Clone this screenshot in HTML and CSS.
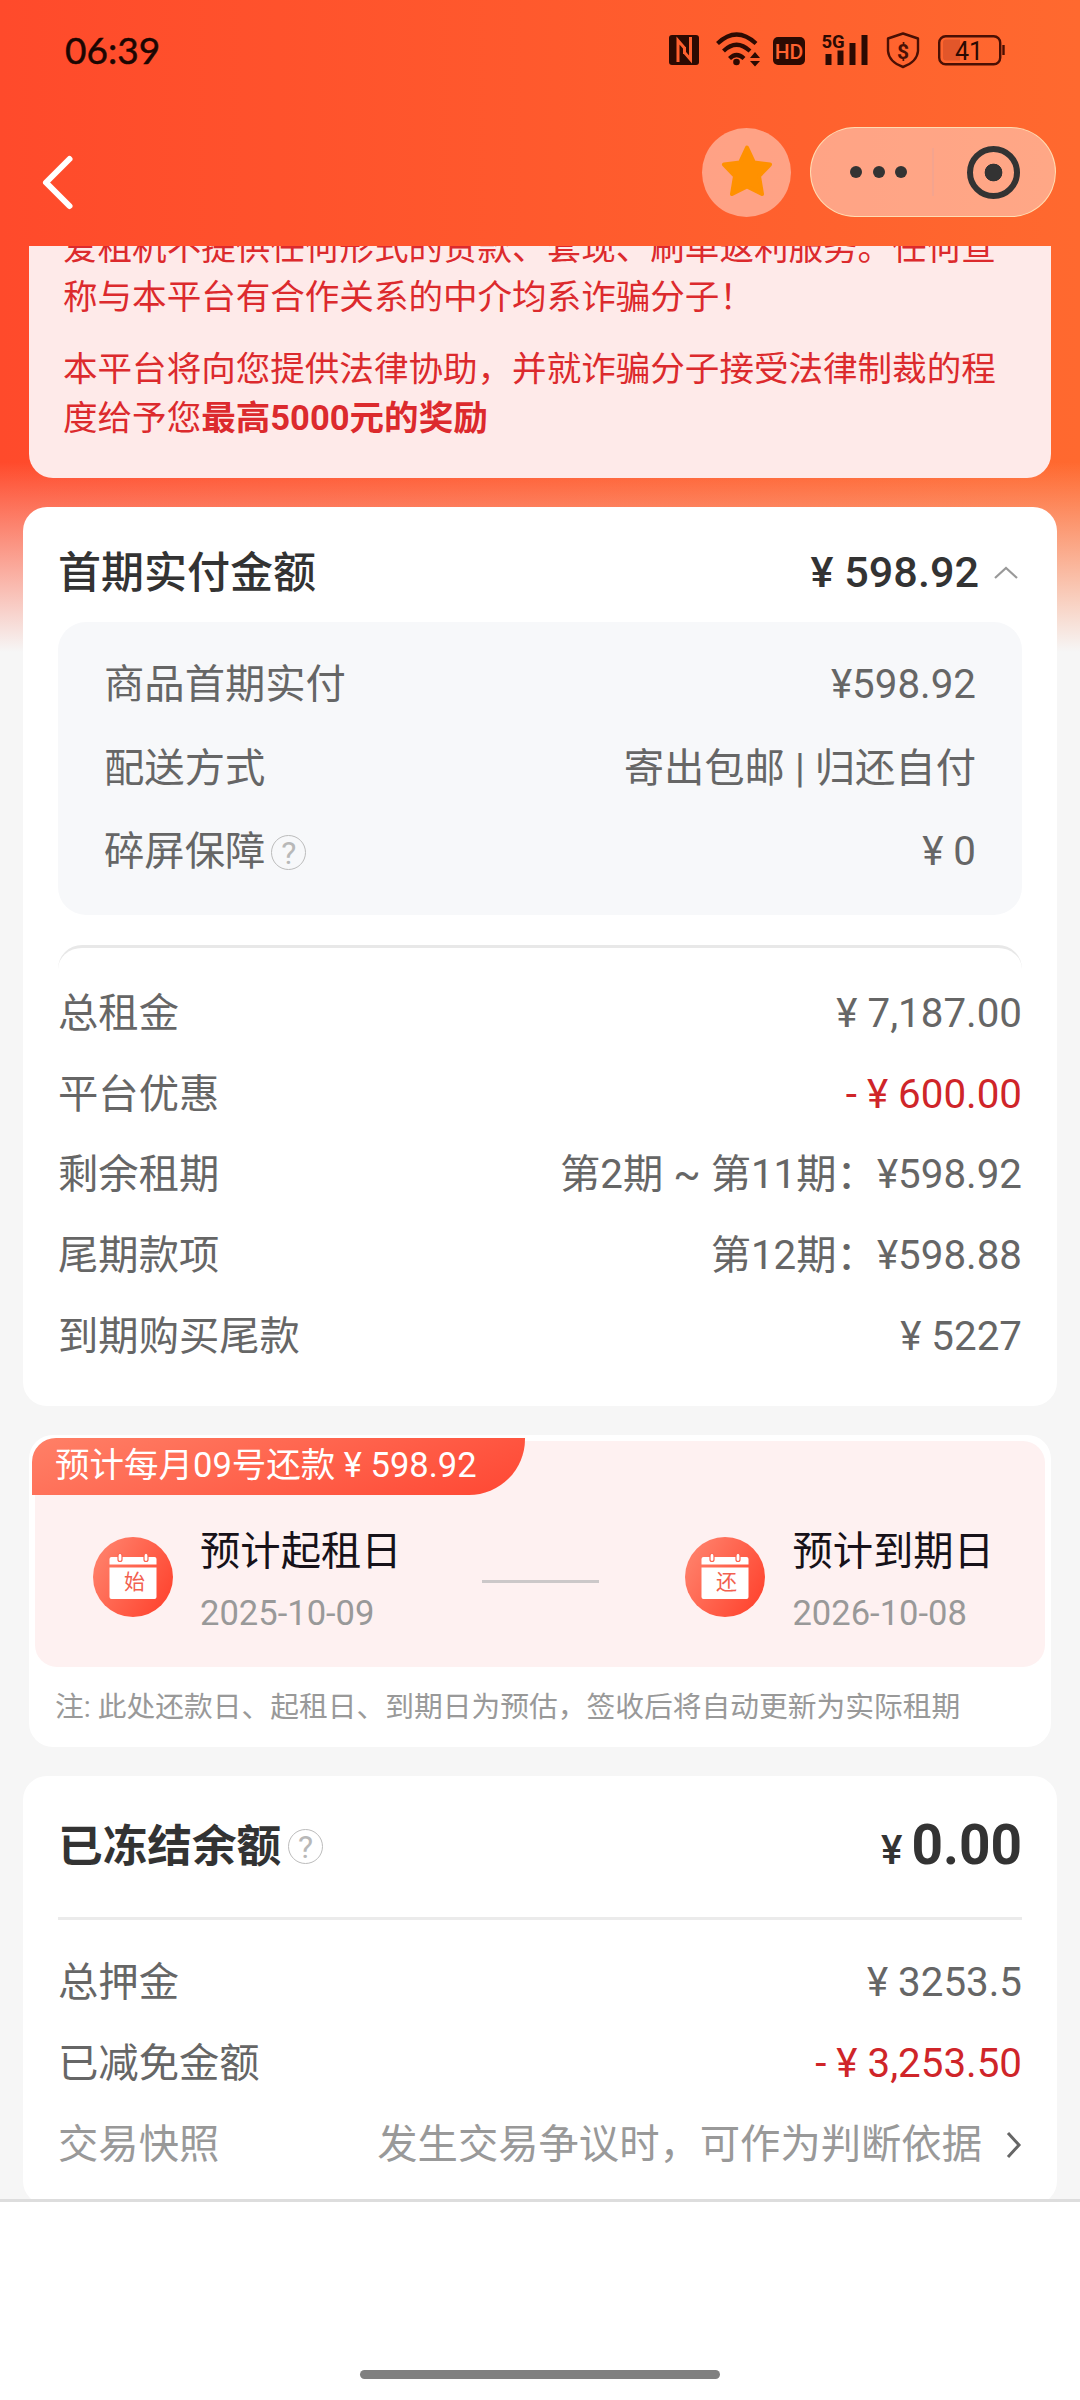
FILE: index.html
```html
<!DOCTYPE html>
<html lang="zh-CN">
<head>
<meta charset="utf-8">
<title>订单确认</title>
<link rel="stylesheet" href="styles.css">
</head>
<body>
<div class="page">
  <header class="header">
    <div class="status">
      <span class="time">06:39</span>
      <svg class="status-icons" width="340" height="40" viewBox="668 30 340 40">
        <rect x="669" y="35" width="30" height="30" rx="3" fill="#2c0a02"/>
        <path d="M678 62V40.500L684.500 48V54M690.500 37V59.500L684.500 52.500V47" fill="none" stroke="#ff602f" stroke-width="3"/>
        <g fill="none" stroke="#2c0a02" stroke-width="4.200">
          <path d="M717.500 43.500Q736.500 25.500 756 43.500"/>
          <path d="M723.500 51Q736.500 38.500 750 51"/>
          <path d="M729.500 58.500Q736.500 51.500 744 58.500"/>
        </g>
        <circle cx="736.500" cy="62" r="3.300" fill="#2c0a02"/>
        <path d="M750 58L755 52L760 58ZM750 61L755 66.500L760 61Z" fill="#2c0a02"/>
        <rect x="773" y="37" width="32" height="28" rx="5" fill="#2c0a02"/>
        <text x="789" y="59" class="hd">HD</text>
        <text x="821.500" y="48" class="fiveg">5G</text>
        <path d="M825.500 54h6v11h-6zM837.500 50.500h6v14.500h-6zM849.500 43h6v22h-6zM861.500 35h6v30h-6z" fill="#2c0a02"/>
        <path d="M903 33.500L918 38.500V51Q917 62 903 67Q889 62 888 51V38.500Z" fill="none" stroke="#4a1004" stroke-width="2.400" stroke-linejoin="round"/>
        <text x="903" y="58.500" class="dollar">$</text>
        <path d="M946 39.500h14v21h-14q-3 0-3-3v-15q0-3 3-3z" fill="#e2562a"/>
        <rect x="939.200" y="36.200" width="61" height="28" rx="6.500" fill="none" stroke="#4a1004" stroke-width="2.400"/>
        <path d="M1003.500 45v10" stroke="#4a1004" stroke-width="2.400"/>
        <text x="969" y="59.500" class="pct">41</text>
      </svg>
    </div>
    <nav class="nav">
      <svg class="back" width="40" height="60" viewBox="38 152 40 60"><path d="M69.500 159L46 182.500L69.500 206" fill="none" stroke="#fff" stroke-width="6" stroke-linecap="round" stroke-linejoin="round"/></svg>
      <div class="nav-actions">
        <div class="fav">
          <svg width="54" height="54" viewBox="-27 -26 54 54"><path d="M0-23.500L7-8.500L23-6.500L12 5L15 23L0 15.500L-15 23L-12 5L-23-6.500L-7-8.500Z" fill="#ff9100" stroke="#ff9100" stroke-width="4" stroke-linejoin="round"/></svg>
        </div>
        <div class="capsule">
          <div class="dots"><i></i><i></i><i></i></div>
          <div class="sep"></div>
          <div class="target"></div>
        </div>
      </div>
    </nav>
  </header>

  <main class="content">
    <section class="notice">
      <p>爱租机不提供任何形式的贷款、套现、刷单返利服务。任何宣<br>称与本平台有合作关系的中介均系诈骗分子！</p>
      <p>本平台将向您提供法律协助，并就诈骗分子接受法律制裁的程<br>度给予您<b>最高5000元的奖励</b></p>
    </section>

    <section class="card bill">
      <div class="bill-head">
        <h2>首期实付金额</h2>
        <div class="sum">¥ 598.92<svg width="26" height="16" viewBox="0 0 26 16"><path d="M2 13L13 3L24 13" fill="none" stroke="#999" stroke-width="2.200"/></svg></div>
      </div>
      <div class="detail">
        <div class="row"><span>商品首期实付</span><span>¥598.92</span></div>
        <div class="row"><span>配送方式</span><span>寄出包邮 | 归还自付</span></div>
        <div class="row"><span class="with-help">碎屏保障<i class="help">?</i></span><span>¥ 0</span></div>
      </div>
      <div class="rows">
        <div class="row"><span>总租金</span><span>¥ 7,187.00</span></div>
        <div class="row"><span>平台优惠</span><span class="red">- ¥ 600.00</span></div>
        <div class="row"><span>剩余租期</span><span>第2期 ~ 第11期：¥598.92</span></div>
        <div class="row"><span>尾期款项</span><span>第12期：¥598.88</span></div>
        <div class="row"><span>到期购买尾款</span><span>¥ 5227</span></div>
      </div>
    </section>

    <section class="card plan">
      <div class="tag">预计每月09号还款 ¥ 598.92</div>
      <div class="term">
        <div class="date">
          <svg width="80" height="80" viewBox="0 0 80 80">
            <defs><linearGradient id="disc" x1="0" y1="0.200" x2="1" y2="0.800"><stop offset="0.100" stop-color="#ff7c66"/><stop offset="0.900" stop-color="#ff4934"/></linearGradient></defs>
            <circle cx="40" cy="40" r="40" fill="url(#disc)"/>
            <path d="M18.500 20h43q2 0 2 2v5.500h-47V22q0-2 2-2zM16.500 30.500h47V60q0 2-2 2h-43q-2 0-2-2z" fill="#fff"/>
            <g fill="#fff" stroke="#fb6450" stroke-width="1.200"><rect x="25" y="16.500" width="4" height="8" rx="2"/><rect x="51" y="16.500" width="4" height="8" rx="2"/></g>
            <text x="41.500" y="52" class="cal">始</text>
          </svg>
          <div class="date-text"><strong>预计起租日</strong><span>2025-10-09</span></div>
        </div>
        <div class="dash"></div>
        <div class="date">
          <svg width="80" height="80" viewBox="0 0 80 80">
            <circle cx="40" cy="40" r="40" fill="url(#disc)"/>
            <path d="M18.500 20h43q2 0 2 2v5.500h-47V22q0-2 2-2zM16.500 30.500h47V60q0 2-2 2h-43q-2 0-2-2z" fill="#fff"/>
            <g fill="#fff" stroke="#fb6450" stroke-width="1.200"><rect x="25" y="16.500" width="4" height="8" rx="2"/><rect x="51" y="16.500" width="4" height="8" rx="2"/></g>
            <text x="41.500" y="52" class="cal">还</text>
          </svg>
          <div class="date-text"><strong>预计到期日</strong><span>2026-10-08</span></div>
        </div>
      </div>
      <p class="note">注: 此处还款日、起租日、到期日为预估，签收后将自动更新为实际租期</p>
    </section>

    <section class="card deposit">
      <div class="dep-head">
        <h2 class="with-help">已冻结余额<i class="help">?</i></h2>
        <div class="balance"><small>¥</small>0.00</div>
      </div>
      <div class="row"><span>总押金</span><span>¥ 3253.5</span></div>
      <div class="row"><span>已减免金额</span><span class="red">- ¥ 3,253.50</span></div>
      <div class="row muted"><span>交易快照</span><span class="link">发生交易争议时，可作为判断依据<svg width="16" height="30" viewBox="0 0 16 30"><path d="M2 3L13 15L2 27" fill="none" stroke="#666" stroke-width="3"/></svg></span></div>
    </section>
  </main>

  <footer class="footer"><div class="home"></div></footer>
</div>
</body>
</html>
```
FILE: styles.css
```css
* { box-sizing: border-box; }

body {
  margin: 0;
  font-family: Roboto, "Noto Sans CJK SC", sans-serif;
  font-size: 40.32px;
  line-height: 60px;
  color: #666;
}

h2, p { margin: 0; }

.page {
  width: 1080px;
  height: 2400px;
  display: flex;
  flex-direction: column;
  overflow: hidden;
  background:
    linear-gradient(to bottom, rgba(246, 246, 246, 0) 462px, #f6f6f6 652px),
    linear-gradient(to right, #ff4a2b, #ff692f);
}

/* status bar and navigation */
.header { height: 246px; flex: none; }

.status {
  height: 100px;
  padding: 0 72px 0 65px;
  display: flex;
  justify-content: space-between;
  align-items: center;
}

.time {
  font: 37px/40px Lato, sans-serif;
  color: #1c0602;
  -webkit-text-stroke: 0.5px #1c0602;
}

.status-icons { display: block; }
.hd { font: 500 21px Roboto, sans-serif; fill: #ff622f; text-anchor: middle; }
.fiveg { font: 700 18.500px Roboto, sans-serif; fill: #2c0a02; }
.dollar { font: 700 21px Roboto, sans-serif; fill: #4a1004; text-anchor: middle; }
.pct { font: 25px Roboto, sans-serif; fill: #2c0a02; text-anchor: middle; }

.nav {
  padding: 27px 24px 0 38px;
  display: flex;
  justify-content: space-between;
  align-items: flex-start;
}

.back { margin-top: 25px; }
.nav-actions { display: flex; gap: 19px; align-items: center; }

.fav {
  width: 89px;
  height: 89px;
  border-radius: 50%;
  background: rgba(255, 255, 255, 0.42);
  display: flex;
  align-items: center;
  justify-content: center;
}

.capsule {
  width: 246px;
  height: 90px;
  border: 1px solid rgba(255, 235, 190, 0.8);
  border-radius: 45px;
  background: rgba(255, 255, 255, 0.42);
  display: flex;
  align-items: center;
  padding-left: 39px;
}

.dots { display: flex; gap: 10.500px; }
.dots i { width: 12px; height: 12px; border-radius: 50%; background: #333; }
.sep { width: 2px; height: 48px; margin-left: 25px; background: #f4a48e; }

.target {
  width: 53px;
  height: 53px;
  margin-left: 33px;
  border: 6px solid #333;
  border-radius: 50%;
  background: radial-gradient(circle, #333 8.500px, transparent 9.200px);
}

/* scrolling content */
.content {
  flex: 1;
  min-height: 0;
  overflow: hidden;
}

.notice {
  height: 232px;
  margin: 0 29px;
  padding: 0 34px;
  overflow: hidden;
  border-radius: 0 0 24px 24px;
  background: #feeae9;
  color: #dc2a2d;
  font-size: 34.56px;
  line-height: 49px;
  white-space: nowrap;
}

.notice p:first-child { margin-top: -22px; }
.notice p + p { margin-top: 23px; }

.card { background: #fff; border-radius: 24px; }

.bill { height: 899px; margin: 29px 23px 0; padding: 0 35px; }

.bill-head {
  height: 115px;
  padding: 16px 3px 0 0;
  display: flex;
  align-items: center;
  justify-content: space-between;
  color: #333;
}

h2 { font-size: 43px; font-weight: 500; }
.sum { font-size: 43.2px; font-weight: 500; display: flex; align-items: center; gap: 14px; }

.detail {
  height: 293px;
  padding: 21.500px 46px 0 46px;
  border-radius: 28px;
  background: #f7f8fa;
}

.row {
  display: flex;
  align-items: center;
  justify-content: space-between;
  height: 80.6px;
  white-space: nowrap;
}

.detail .row { height: 83.5px; }

.rows {
  margin-top: 30px;
  padding-top: 26px;
  border-top: 3px solid #e8e8e8;
  border-radius: 24px 24px 0 0;
}

.red { color: #cf2529; }

.with-help { display: flex; align-items: center; }

.help {
  width: 35px;
  height: 35px;
  margin-left: 6px;
  border: 1.500px solid #bcbcbc;
  border-radius: 50%;
  font: 400 32px/34px Roboto, sans-serif;
  color: #b8b8b8;
  text-align: center;
}

/* repayment plan */
.plan {
  height: 312px;
  margin: 29px 29px 0;
  padding: 6px;
  position: relative;
}

.tag {
  position: absolute;
  left: 3px;
  top: 3px;
  width: 493px;
  height: 57px;
  padding-left: 23px;
  border-radius: 24px 0 56px 0;
  background: linear-gradient(160deg, #ff8067, #ff4733);
  color: #fff;
  font-size: 34.5px;
  line-height: 55px;
  white-space: nowrap;
}

.term {
  height: 226px;
  padding: 45px 51px 0 58px;
  border-radius: 22px;
  background: #fef1f1;
  display: flex;
  align-items: center;
  justify-content: space-between;
}

.date { display: flex; align-items: center; gap: 27px; }
.date svg { display: block; }
.date-text { display: flex; flex-direction: column; height: 125px; padding-top: 7px; justify-content: space-between; white-space: nowrap; }
.date-text strong { font-weight: 400; line-height: 62px; color: #171219; }
.date-text span { font-size: 34.56px; line-height: 52px; color: #999; }
.dash { width: 117px; height: 3px; margin: 10px 0 0 -6px; background: #ccc8c9; }

.note {
  padding: 18px 20px 0;
  font-size: 28.75px;
  line-height: 44px;
  color: #999;
  white-space: nowrap;
}

.cal { font: 21px "Noto Sans CJK SC", sans-serif; fill: #f2604f; text-anchor: middle; }

/* deposit */
.deposit { height: 429px; margin: 29px 23px 0; padding: 0 35px; }

.dep-head {
  height: 144px;
  margin-bottom: 22px;
  border-bottom: 3px solid #ebebeb;
  display: flex;
  align-items: center;
  justify-content: space-between;
  color: #333;
}

.deposit h2 { font-size: 44.64px; font-weight: 700; }
.deposit .help { margin-left: 7px; }
.balance { font-size: 55px; font-weight: 700; margin-top: 3px; }
.balance small { font-size: 40.32px; font-weight: 500; margin-right: 9px; }
.deposit .row { height: 81px; }
.muted { color: #999; }
.link { display: flex; align-items: center; gap: 24px; }

/* bottom bar */
.footer {
  flex: none;
  height: 201px;
  border-top: 3px solid #ddd;
  background: #fff;
  display: flex;
  justify-content: center;
  align-items: flex-end;
  padding-bottom: 21px;
}

.home { width: 360px; height: 9px; border-radius: 5px; background: #808080; }
```
